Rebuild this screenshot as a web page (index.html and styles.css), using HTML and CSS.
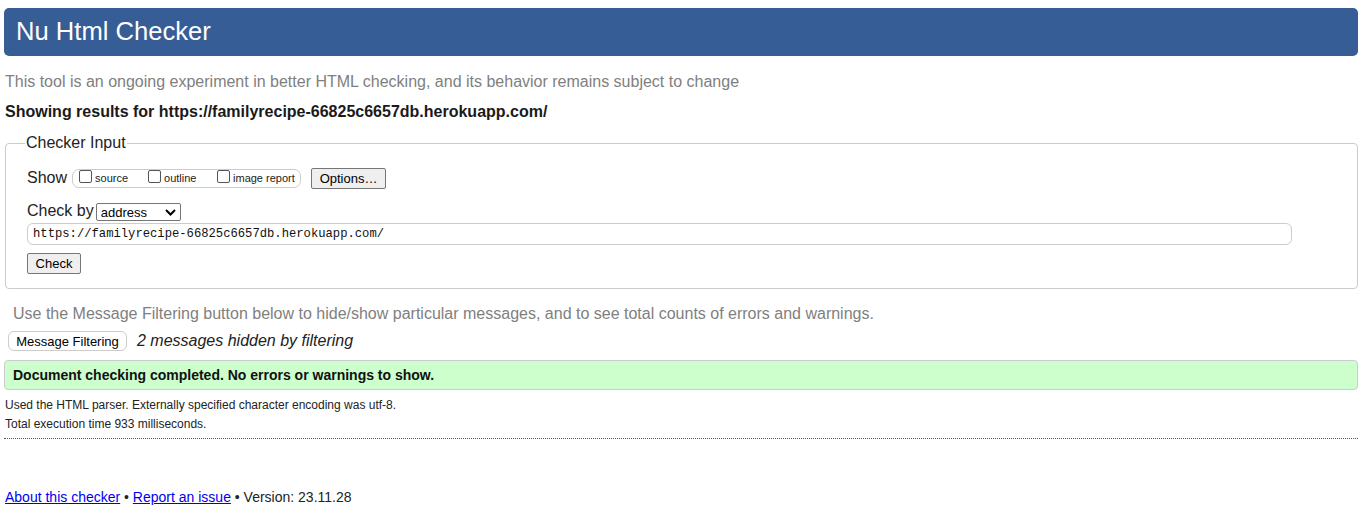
FILE: index.html
```html
<!DOCTYPE html>
<html lang="en">
<head>
<meta charset="utf-8">
<title>Nu Html Checker</title>
<link rel="stylesheet" href="styles.css">
</head>
<body>
<header class="banner"><h1>Nu Html Checker</h1></header>
<p class="intro">This tool is an ongoing experiment in better HTML checking, and its behavior remains subject to change</p>
<p class="showing">Showing results for https://familyrecipe-66825c6657db.herokuapp.com/</p>
<fieldset class="input-box">
  <legend>Checker Input</legend>
  <div class="row show-row">
    <span class="lbl">Show</span>
    <span class="opts">
      <label class="opt"><span class="cb"></span>source</label>
      <label class="opt"><span class="cb"></span>outline</label>
      <label class="opt"><span class="cb"></span>image report</label>
    </span>
    <button class="btn options">Options…</button>
  </div>
  <div class="row checkby-row">
    <span class="lbl">Check by</span>
    <span class="select">address<svg width="11" height="7" viewBox="0 0 11 7"><path d="M1 1 L5.5 5.5 L10 1" fill="none" stroke="#000" stroke-width="2"/></svg></span>
  </div>
  <div class="url">https://familyrecipe-66825c6657db.herokuapp.com/</div>
  <button class="btn check">Check</button>
</fieldset>
<p class="filter-note">Use the Message Filtering button below to hide/show particular messages, and to see total counts of errors and warnings.</p>
<div class="filter-row">
  <button class="btn filter">Message Filtering</button>
  <span class="hidden-count">2 messages hidden by filtering</span>
</div>
<div class="success">Document checking completed. No errors or warnings to show.</div>
<p class="meta first">Used the HTML parser. Externally specified character encoding was utf-8.</p>
<p class="meta">Total execution time 933 milliseconds.</p>
<hr class="sep">
<footer class="foot"><a href="#">About this checker</a> • <a href="#">Report an issue</a> • Version: 23.11.28</footer>
</body>
</html>
```
FILE: styles.css
```css
html, body { margin: 0; padding: 0; background: #fff; }
body {
  font-family: "Liberation Sans", Arial, sans-serif;
  color: #000;
  padding: 8px 6px 0 4px;
}
.banner {
  background: #365d95;
  border-radius: 5px;
  height: 48px;
  display: flex;
  align-items: center;
  padding-left: 12px;
}
.banner h1 {
  margin: 0;
  color: #fff;
  font-weight: normal;
  font-size: 25.6px;
  line-height: 1;
}
.intro {
  margin: 17px 0 0 1px;
  color: #808080;
  font-size: 16px;
  line-height: 18px;
}
.showing {
  margin: 12px 0 0 1px;
  font-weight: bold;
  font-size: 16px;
  line-height: 18px;
  color: #1a1a1a;
}
.input-box {
  margin: 13px 0 0 1px;
  border: 1px solid #ccc;
  border-radius: 4px;
  padding: 8px 12px 14px 21px;
  min-width: 0;
}
.input-box legend {
  font-size: 16px;
  padding: 0 1px;
  margin-left: -2px;
  color: #222;
  line-height: 18px;
}
.row { display: flex; align-items: center; }
.lbl { font-size: 16px; color: #222; }
.show-row { margin-top: 7px; height: 22px; }
.opts {
  margin-left: 5px;
  border: 1px solid #ccc;
  border-radius: 7px;
  height: 17px;
  width: 221px;
  display: flex;
  align-items: center;
  font-size: 11px;
  padding-left: 6px;
  box-sizing: content-box;
}
.opt { display: flex; align-items: center; color: #222; }
.opt:nth-child(1) { width: 69px; }
.opt:nth-child(2) { width: 69px; }
.cb {
  display: inline-block;
  width: 11px; height: 11px;
  border: 1px solid #555;
  border-radius: 2px;
  margin-right: 3px;
  margin-top: -3px;
}
.btn {
  font-family: "Liberation Sans", Arial, sans-serif;
  font-size: 13px;
  background: #efefef;
  border: 1px solid #767676;
  border-radius: 2px;
  color: #000;
  padding: 0 6px;
  height: 21px;
  line-height: 19px;
  margin: 0;
}
.options { margin-left: 10px; width: 75px; }
.checkby-row { margin-top: 12px; height: 20px; }
.select {
  margin-left: 2px;
  border: 1px solid #767676;
  border-radius: 2px;
  width: 85px;
  height: 18px;
  box-sizing: border-box;
  display: flex;
  align-items: center;
  justify-content: space-between;
  padding: 0 4px 0 4px;
  font-size: 13px;
  margin-top: 2px;
}
.url {
  margin-top: 2px;
  margin-right: 53px;
  border: 1px solid #ccc;
  border-radius: 6px;
  height: 22px;
  box-sizing: border-box;
  font-family: "Liberation Mono", monospace;
  font-size: 12.2px;
  line-height: 21px;
  padding-left: 5px;
  color: #111;
}
.check { margin-top: 8px; width: 54px; height: 21px; padding: 0; }
.filter-note {
  margin: 16px 0 0 9px;
  color: #808080;
  font-size: 16px;
  line-height: 18px;
}
.filter-row { margin-top: 8px; display: flex; align-items: center; }
.filter {
  margin-left: 4px;
  width: 119px;
  height: 20px;
  border: 1px solid #ccc;
  border-radius: 6px;
  background: #fff;
  padding: 0;
  font-size: 13px;
}
.hidden-count { margin-left: 10px; font-style: italic; font-size: 16px; color: #222; }
.success {
  margin-top: 9px;
  background: #ccffcc;
  border: 1px solid #ccc;
  border-radius: 4px;
  height: 30px;
  box-sizing: border-box;
  display: flex;
  align-items: center;
  padding-left: 8px;
  font-weight: bold;
  font-size: 14px;
  color: #111;
}
.meta {
  margin: 0;
  font-size: 12px;
  line-height: 19px;
  padding-left: 1px;
  color: #222;
}
.meta.first { margin-top: 6px; }
.sep {
  margin: 4px 0 0 0;
  border: 0;
  border-top: 1px dotted #555;
  height: 0;
}
.foot {
  margin-top: 50px;
  padding-left: 1px;
  font-size: 14px;
  color: #222;
}
.foot a { color: #0000ee; }
```
